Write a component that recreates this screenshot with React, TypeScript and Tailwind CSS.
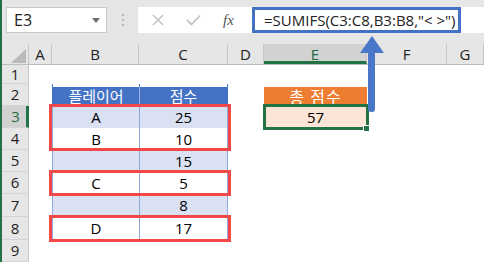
import React from 'react';

type Row = {
  n: number;
  h: string;
  b?: string;
  c?: string;
  band?: boolean;
  head?: boolean;
};

const ROWS: Row[] = [
  { n: 1, h: 'h-[19px]' },
  { n: 2, h: 'h-[22px]', head: true },
  { n: 3, h: 'h-[22px]', b: 'A', c: '25', band: true },
  { n: 4, h: 'h-[22px]', b: 'B', c: '10' },
  { n: 5, h: 'h-[22px]', c: '15', band: true },
  { n: 6, h: 'h-[22px]', b: 'C', c: '5' },
  { n: 7, h: 'h-[23px]', c: '8', band: true },
  { n: 8, h: 'h-[23px]', b: 'D', c: '17' },
  { n: 9, h: 'h-[22px]' },
];

const COLS = [
  { id: 'A', w: 'w-[23px]' },
  { id: 'B', w: 'w-[87px]' },
  { id: 'C', w: 'w-[89px]' },
  { id: 'D', w: 'w-[36px]' },
  { id: 'E', w: 'w-[103px]' },
  { id: 'F', w: 'w-[80px]' },
  { id: 'G', w: 'flex-1' },
];

const TableCell: React.FC<{ row: Row; col: 'B' | 'C' }> = ({ row, col }) => {
  const w = col === 'B' ? 'w-[87px] border-l' : 'w-[89px] border-l border-r';
  if (row.head) {
    return (
      <div className={`${w} h-full pt-[3px] border-[#4472c4]`}>
        <div className={`h-full bg-[#4472c4] text-white flex items-center justify-center text-[15px] ${col === 'C' ? 'border-l border-[#9fb6e0] -ml-px' : ''}`}>
          {col === 'B' ? '플레이어' : '점수'}
        </div>
      </div>
    );
  }
  return (
    <div className={`${w} h-full border-[#8ea9db] flex items-center justify-center text-[15px] text-black ${row.band ? 'bg-[#d9e1f2]' : 'bg-white'}`}>
      {col === 'B' ? row.b : row.c}
    </div>
  );
};

export default function App() {
  return (
    <div className="relative w-[484px] h-[262px] overflow-hidden bg-white border-l-2 border-[#217346] font-['Open_Sans','Noto_Sans_CJK_KR',sans-serif]">
      {/* formula bar */}
      <div className="h-[44px] bg-[#e6e6e6] flex items-start pt-[7px] pl-[4px]">
        <div className="w-[101px] shrink-0 h-[26px] bg-white border border-[#c8c8c8] flex items-center pl-[7px] pr-[5px] text-[16px] text-[#222]">
          <span className="flex-1">E3</span>
          <span className="w-0 h-0 border-l-[4px] border-r-[4px] border-t-[5px] border-l-transparent border-r-transparent border-t-[#6b6b6b] mr-[1px]" />
        </div>
        <div className="w-[31px] shrink-0 h-[26px] flex flex-col items-center justify-center gap-[3px]">
          <span className="w-[2px] h-[2px] bg-[#b5b5b5]" />
          <span className="w-[2px] h-[2px] bg-[#b5b5b5]" />
          <span className="w-[2px] h-[2px] bg-[#b5b5b5]" />
        </div>
        <div className="flex-1 h-[26px] bg-white flex items-center">
          <div className="w-[114px] shrink-0 flex items-center">
            <svg width="12" height="12" viewBox="0 0 12 12" className="ml-[14px]">
              <path d="M1 1 L11 11 M11 1 L1 11" stroke="#c4c4c4" strokeWidth="1.6" />
            </svg>
            <svg width="15" height="12" viewBox="0 0 15 12" className="ml-[22px]">
              <path d="M1 6 L5.5 10.5 L14 1.5" stroke="#c4c4c4" strokeWidth="1.8" fill="none" />
            </svg>
            <span className="ml-[22px] text-[15px] italic text-[#555] font-['Liberation_Serif',serif]">fx</span>
          </div>
          <div className="w-[209px] shrink-0 h-[26px] border-[3px] border-[#4472c4] flex items-center pl-[9px] text-[15px] text-[#222] whitespace-nowrap overflow-hidden">
            =SUMIFS(C3:C8,B3:B8,"&lt; &gt;")
          </div>
        </div>
      </div>

      {/* column headers */}
      <div className="flex h-[21px] bg-[#e6e6e6] border-b border-[#bdbdbd]">
        <div className="w-[27px] h-full relative border-r border-[#c6c6c6]">
          <svg width="15" height="14" viewBox="0 0 15 14" className="absolute right-[2px] bottom-[1px]">
            <polygon points="15,0 15,14 0,14" fill="#bababa" />
          </svg>
        </div>
        {COLS.map((c) => (
          <div
            key={c.id}
            className={`${c.w} h-full flex items-center justify-center text-[15px] border-r border-[#c6c6c6] ${
              c.id === 'E' ? 'bg-[#d2d2d2] text-[#1e6b41] border-b-[3px] border-b-[#217346] pt-[3px]' : 'text-[#222]'
            }`}
          >
            {c.id}
          </div>
        ))}
      </div>

      {/* rows */}
      {ROWS.map((r) => (
        <div key={r.n} className={`flex ${r.h}`}>
          <div
            className={`w-[27px] h-full flex items-center justify-center text-[15px] border-b border-[#d4d4d4] ${
              r.n === 3
                ? 'bg-[#d2d2d2] text-[#1e6b41] border-r-[3px] border-r-[#217346] pl-[3px]'
                : 'bg-[#e6e6e6] text-[#222] border-r border-r-[#c6c6c6]'
            }`}
          >
            {r.n}
          </div>
          <div className="w-[23px]" />
          {r.n >= 2 && r.n <= 8 ? (
            <>
              <TableCell row={r} col="B" />
              <TableCell row={r} col="C" />
            </>
          ) : (
            <div className="w-[176px]" />
          )}
          <div className="w-[36px]" />
          <div className="w-[103px] h-full">
            {r.head && (
              <div className="mt-[3px] h-[19px] bg-[#ed7d31] text-white flex items-center justify-center text-[16px] tracking-[1px]">
                총 점수
              </div>
            )}
            {r.n === 3 && (
              <div className="h-full bg-[#fce4d6] flex items-center justify-center text-[15px] text-black">57</div>
            )}
          </div>
        </div>
      ))}

      {/* highlight boxes */}
      <div className="absolute left-[47px] top-[104px] w-[182px] h-[47px] border-[3px] border-[#f34848]" />
      <div className="absolute left-[47px] top-[170px] w-[182px] h-[26px] border-[3px] border-[#f34848]" />
      <div className="absolute left-[47px] top-[215px] w-[182px] h-[27px] border-[3px] border-[#f34848]" />

      {/* selected cell */}
      <div className="absolute left-[261px] top-[104px] w-[106px] h-[26px] border-[3px] border-[#217346]" />
      <div className="absolute left-[361px] top-[125px] w-[7px] h-[7px] bg-[#217346] border border-white" />

      {/* arrow */}
      <svg width="28" height="80" viewBox="0 0 28 80" className="absolute left-[356px] top-[35px]">
        <polygon points="14,1 2,18 26,18" fill="#4a78c9" />
        <rect x="10" y="16" width="7" height="61" rx="3" fill="#4a78c9" />
      </svg>
    </div>
  );
}
